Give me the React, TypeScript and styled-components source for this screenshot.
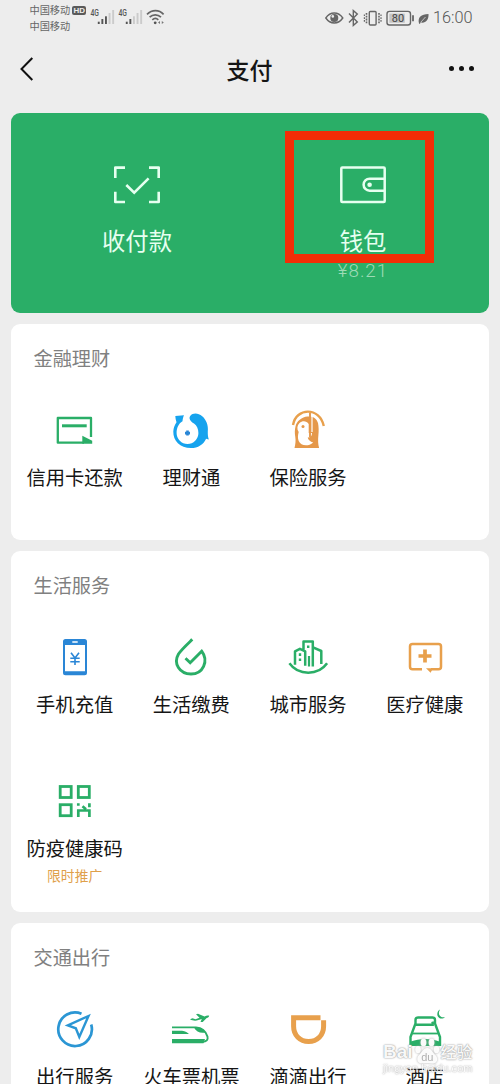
import React from "react";
import styled, { createGlobalStyle } from "styled-components";

const GREEN = "#2aae67";
const ORANGE = "#e8a04c";
const BLUE = "#2a86d6";

const GlobalStyle = createGlobalStyle`
  *, *::before, *::after { box-sizing: border-box; }
  body {
    margin: 0;
    background: #ededed;
    font-family: "Noto Sans CJK SC", sans-serif;
    color: #151515;
  }
`;

const Screen = styled.div`
  position: relative;
  width: 500px;
  height: 1084px;
  overflow: hidden;
  background: #ededed;
`;

const StatusBar = styled.header`
  display: flex;
  justify-content: space-between;
  height: 36px;
  padding: 0 28px 0 29.5px;
  color: #666;
`;

const Carriers = styled.div`
  display: flex;
  align-items: flex-start;
`;

const CarrierNames = styled.div`
  display: flex;
  flex-direction: column;
  padding-top: 2px;
  font-size: 10.2px;
  line-height: 15.5px;
`;

const HdBadge = styled.span`
  margin: 5.5px 3.5px 0 2px;
  width: 14px;
  height: 9px;
  border-radius: 2px;
  background: #5a5a5a;
  color: #ededed;
  font: bold 8px/9px "Liberation Sans", sans-serif;
  text-align: center;
`;

const Indicators = styled.div`
  display: flex;
  align-items: center;
  height: 35px;
`;

const Clock = styled.span`
  margin-left: 3px;
  width: 39px;
  font: 300 16.3px/20px Roboto, sans-serif;
  color: #555;
  white-space: nowrap;
`;

const NavBar = styled.nav`
  display: grid;
  grid-template-columns: 60px 1fr 60px;
  align-items: center;
  height: 65px;
  margin-bottom: 11.5px;
  padding: 0 26px 0 19px;
`;

const Title = styled.h1`
  margin: 0;
  padding-left: 6px;
  font-size: 23px;
  line-height: 32px;
  font-weight: 500;
  text-align: center;
`;

const MoreButton = styled.div`
  display: flex;
  justify-content: flex-end;
  gap: 4.6px;
`;

const Dot = styled.i`
  width: 5.2px;
  height: 5.2px;
  border-radius: 50%;
  background: #111;
`;

const PayCard = styled.section`
  display: grid;
  grid-template-columns: 226px 226px;
  justify-content: center;
  width: 478px;
  height: 200px;
  margin: 0 auto 11px 11px;
  border-radius: 9px;
  background: ${GREEN};
  color: #e6fff0;
`;

const PayItem = styled.div`
  position: relative;
  display: flex;
  flex-direction: column;
  align-items: center;
  padding-top: 48.5px;
`;

const PayLabel = styled.span`
  margin-top: 13.5px;
  font-size: 23.3px;
  line-height: 34px;
`;

const Balance = styled.span`
  margin-top: 2px;
  font: 300 18.8px/24px Roboto, sans-serif;
  letter-spacing: 1px;
  color: #9ddbb6;
`;

const Highlight = styled.div`
  position: absolute;
  left: 35px;
  top: 18.5px;
  width: 149px;
  height: 132px;
  border: 9px solid #f32d06;
`;

const Card = styled.section<{ $height: number }>`
  width: 478px;
  height: ${(p) => p.$height}px;
  margin: 0 0 11px 11px;
  border-radius: 9px;
  background: #fff;
`;

const CardTitle = styled.h2`
  margin: 0;
  padding: 20px 0 34px 22.5px;
  font-size: 19.2px;
  line-height: 28px;
  font-weight: 400;
  color: #808080;
`;

const Grid = styled.div`
  display: grid;
  grid-template-columns: repeat(4, 116.7px);
  grid-auto-rows: 143.5px;
  padding-left: 5.3px;
`;

const Cell = styled.div`
  display: flex;
  flex-direction: column;
  align-items: center;
  white-space: nowrap;
`;

const Label = styled.span`
  margin-top: 9px;
  font-size: 19.3px;
  line-height: 28px;
`;

const Promo = styled.span`
  margin-top: 3.5px;
  font-size: 13.8px;
  line-height: 20px;
  color: #dfa04a;
`;

const Watermark = styled.div`
  position: absolute;
  left: 383px;
  top: 1038px;
  width: 92px;
  color: rgba(255, 255, 255, 0.95);
  text-shadow: 0 0 2px #999, 0 0 1px #aaa;
`;

const WatermarkBrand = styled.div`
  display: flex;
  align-items: center;
  height: 27px;
  font: bold 19px/27px "Liberation Sans", "Noto Sans CJK SC", sans-serif;
`;

const WatermarkCn = styled.span`
  margin-left: 1px;
  font: 500 16px/27px "Noto Sans CJK SC", sans-serif;
`;

const WatermarkUrl = styled.div`
  font: 11px/11px "Liberation Sans", sans-serif;
  letter-spacing: 0.05px;
  margin-top: -2px;
  opacity: 0.75;
`;

const Icon = ({ children }: { children: React.ReactNode }) => (
  <svg width="48" height="48" viewBox="0 0 48 48" fill="none">
    {children}
  </svg>
);

const Signal = ({ strong }: { strong: number }) => (
  <svg width="28" height="30" viewBox="0 0 28 30">
    <text x="0.5" y="16.3" fontSize="8.500" fill="#555" fontFamily="Roboto, sans-serif" fontWeight="500" textLength="8.5" lengthAdjust="spacingAndGlyphs">
      4G
    </text>
    {[0, 1, 2, 3, 4].map((i) => (
      <rect key={i} x={7.8 + i * 3.6} y={[21.7, 19, 16.3, 13, 10][i]} width="1.9" height={24 - [21.7, 19, 16.3, 13, 10][i]} fill={i < strong ? "#555" : "#cbcbcb"} />
    ))}
  </svg>
);

const Wifi = () => (
  <svg width="20" height="30" viewBox="0 0 20 30" fill="none" stroke="#666" strokeWidth="1.7">
    <path d="M1 14.3C6 9.5 13 9.5 17.6 14.3M3.6 17.2c3.3-3.2 8-3.2 11.4 0M6.3 19.8c2-1.7 4.2-1.7 6 0" />
    <circle cx="9.2" cy="22.8" r="1.4" fill="#555" stroke="none" />
    <path d="M12 22.5l2-1.6v3.2zM17.8 22.5l-2-1.6v3.2z" fill="#777" stroke="none" />
  </svg>
);

const StatusIcons = () => (
  <svg width="105" height="24" viewBox="325 5 105 24" fill="none" stroke="#666" strokeWidth="1.4">
    <path d="M325.8 17c4.5-6.6 12.4-6.6 17 0-4.6 6.6-12.5 6.6-17 0Z" />
    <circle cx="334.3" cy="17" r="4" fill="#666" stroke="none" />
    <circle cx="332.8" cy="15.4" r="1.3" fill="#ededed" stroke="none" />
    <path d="M349 12.5l8.3 8.500-4 3.400V9.600l4 3.400-8.300 8.500" />
    <rect x="369.3" y="10.5" width="6.8" height="13.5" rx="1" />
    <path d="M366.5 12v10.500M379 12v10.500" strokeDasharray="1.8 1" strokeWidth="1.6" />
    <path d="M364.4 13.500v7.500M381 13.500v7.500" strokeDasharray="1.6 1.2" strokeWidth="1.2" />
    <rect x="387" y="10.4" width="23.5" height="13.6" rx="2.5" />
    <rect x="389.3" y="12.6" width="15.5" height="9.2" fill="#c5c5c5" stroke="none" />
    <path d="M413 14.3v6" strokeWidth="1.8" />
    <text x="398" y="21.2" fontSize="11" textAnchor="middle" fill="#444" stroke="none" fontFamily="Roboto, sans-serif">
      80
    </text>
    <path d="M419 22.5c-1.5-6 2-9.5 9.5-9.5.5 5.500-3 9.500-7.500 8.500l-1.500 1.500z" fill="#666" stroke="none" />
    <path d="M420.500 21.500l5-5.500" stroke="#ededed" strokeWidth="0.700" />
  </svg>
);

const ScanPay = () => (
  <svg width="50" height="48" viewBox="112 161 50 48" fill="none" stroke="#e6fff0" strokeWidth="2.600">
    <path d="M115.300 178v-10.400H125M149 167.600h9.700V178M158.700 191.700v10.300H149M125 202h-9.700v-10.300" strokeLinejoin="round" />
    <path d="M126.300 185l7.900 7.600 14.400-14.200" />
  </svg>
);

const Wallet = () => (
  <svg width="50" height="48" viewBox="338.200 161 50 48" fill="none" stroke="#e6fff0" strokeWidth="2.500">
    <rect x="341.500" y="167.600" width="43.400" height="34.400" rx="1" />
    <path d="M385 178.700h-15.200a6 6 0 0 0 0 12H385" />
    <circle cx="369.800" cy="184.700" r="2.300" fill="#e6fff0" stroke="none" />
  </svg>
);

const CreditCard = () => (
  <Icon>
    <path d="M40 31V12H6.800v24.700H33" stroke={GREEN} strokeWidth="2.300" strokeLinejoin="round" />
    <path d="M11 19.800h24.700" stroke={GREEN} strokeWidth="3" />
    <path d="M31.300 29.800l9.900 5v3H31.300z" fill={GREEN} />
  </Icon>
);

const Fund = () => (
  <Icon>
    <path
      d="M8.300 10l8.700-.8c-.8 1.800-1.300 3.600-1.500 6C11.500 17.500 9.500 22 9.600 27a10.900 10.900 0 0 0 21.800 0c0-4-1.500-7.300-4.400-9.500-3.800-2-5.500-5.200-3.800-7.500 2.800-3.400 8-3 12 .2 4 3.300 6.300 9 5.600 15.300-.1 3 .1 5 1 8l-2.700-.8C36.500 38.500 31 42 24 42 13 42 6 34.500 6.300 25.500c.2-3.500 1.200-6.500 3.200-9.300-.7-2-1.100-4-1.200-6.200Z"
      fill="#16a3ee"
    />
    <path d="M20.500 24.600v5M18 27.100h5" stroke={BLUE} strokeWidth="2.600" />
  </Icon>
);

const Insurance = () => (
  <Icon>
    <path d="M9 19C12 1.500 35.500.500 39.800 20" stroke={ORANGE} strokeWidth="2.400" />
    <path d="M11.500 20.500c1-5.500 6.500-9.500 12-10 5-.4 9 1.500 10.500 6.500.8 4 .8 8 .4 12-.5 5-.4 9 .7 13H10.500c.9-4 1.400-7 .8-11-.7-4-.6-7 .2-10.500Z" fill="#e5984a" />
    <path d="M15.500 17c2.700-2.500 7-2.500 9.200 1V27h3.300c0 3.200-1.500 4.500-4.300 4.600.5 2.400 2.500 4.200 5.500 4.900-5 4.500-12.500 3.500-14.500-1.500-1.200-3-.8-6 0-9-2-3-1.700-6.500.8-9Z" fill="#fff" />
    <path d="M26 7v24" stroke="#e5984a" strokeWidth="1.900" />
    <path d="M28 10.500V26" stroke="#fff" strokeWidth="1.200" />
    <circle cx="19" cy="20.500" r="1.500" fill="#e5984a" />
  </Icon>
);

const Phone = () => (
  <Icon>
    <path fillRule="evenodd" d="M14.500 6h19a2.500 2.500 0 0 1 2.500 2.500v31.200a2.500 2.500 0 0 1-2.500 2.500h-19a2.500 2.500 0 0 1-2.500-2.500V8.500A2.500 2.500 0 0 1 14.500 6ZM14 12v26.200h20V12Z" fill={BLUE} />
    <path d="M21.300 9h5.400" stroke="#fff" strokeWidth="1.500" />
    <path d="M20 19.700l4 5.300 4-5.300M24 25v7M19.300 25.300h9.400M19.300 28.700h9.400" stroke={BLUE} strokeWidth="1.600" />
  </Icon>
);

const Utilities = () => (
  <Icon>
    <path d="M25.300 6.400C20 11.500 14.500 16.500 11.500 21 6 30.500 12.500 41 24 41c12 0 18-13 10.700-22.800L23.200 29.800l-4.700-4.500" stroke={GREEN} strokeWidth="2.900" />
  </Icon>
);

const City = () => (
  <Icon>
    <path d="M5.400 30.300c9 12.600 28.700 12.600 37.700 0" stroke={GREEN} strokeWidth="2.500" />
    <path d="M11 31.800V18.300l4.900-2.500 5.300 2.500v14.500M19.500 16.500V8.500h9.300v25M29 14.300l8.300 3.700v13" stroke={GREEN} strokeWidth="2.500" strokeLinejoin="round" />
    <path d="M25 23v10.500" stroke={GREEN} strokeWidth="2.200" />
    <path d="M16 20.300v2.600M16 25.500v2.600M24.200 12.500v2.600" stroke={GREEN} strokeWidth="2.400" />
  </Icon>
);

const Medical = () => (
  <Icon>
    <path d="M21 36.300h-9.500a2.500 2.500 0 0 1-2.500-2.500V13.500a2.500 2.500 0 0 1 2.500-2.500h26a2.500 2.500 0 0 1 2.500 2.500v20.300a2.500 2.500 0 0 1-2.500 2.500H30" stroke={ORANGE} strokeWidth="2.500" />
    <path d="M25 35.200h7l-2.400 4.500z" fill={ORANGE} />
    <path d="M17.500 23h13M24 16.500v13" stroke={ORANGE} strokeWidth="3.700" />
  </Icon>
);

const HealthCode = () => (
  <Icon>
    <g stroke={GREEN} strokeWidth="2.800">
      <rect x="9.200" y="9.500" width="11" height="11" />
      <rect x="27.300" y="9.500" width="11" height="11" />
      <rect x="9.200" y="27.700" width="11" height="11" />
      <path d="M27.300 26.300v2.500M38.400 26.300v4M27.300 40v-6.500h11.100V40M31.500 29.200l3.500 3" strokeWidth="2.700" />
    </g>
  </Icon>
);

const Travel = () => (
  <Icon>
    <path d="M30.500 8.700A16.800 16.800 0 1 0 40.200 19.500" stroke="#2b96d4" strokeWidth="2.700" />
    <path d="M37.500 11L16.800 20.300l8 3 3.500 8.700z" stroke="#2b96d4" strokeWidth="2.400" />
  </Icon>
);

const TrainPlane = () => (
  <Icon>
    <path d="M5 22.400h24c6 .3 10 4.500 11.500 9.200.8 3.200-1 5.300-5 5.300" stroke={GREEN} strokeWidth="1.900" />
    <path d="M5 34h33l-1.500 4.300H5zM5 25.800h10c3.500.6 5.500 1.700 7 3.200H5zM27 22.500c7-.5 10 2 11.500 5-4.500 1.200-9.500-.5-11.500-5Z" fill={GREEN} />
    <path d="M23 14.200l2.500-1 3 1 4-1.500-3.500-3.500 2-.5 6.500 2.700c2-.9 3.500-1 4.700-.6-.2 1-1 1.700-2.500 2.300l-4 3.800-2.200.2 1.300-3c-4 1.500-8 2.500-11.800.1Z" fill={GREEN} />
  </Icon>
);

const Didi = () => (
  <Icon>
    <path d="M36.500 12.700H9.600v8.500c0 9 6.300 15.300 15 15.300s15-6.300 15-15.300v-6" stroke={ORANGE} strokeWidth="5" />
  </Icon>
);

const Hotel = () => (
  <Icon>
    <path d="M14.200 19.700h17.500c0-1.200 0-2-.3-3M9.500 41V32l5-13.500v-3.500a2.500 2.500 0 0 1 2.500-2.500h14.500a2.500 2.500 0 0 1 2.500 2.500v3.500l5 13.500v9" stroke={GREEN} strokeWidth="2.400" />
    <path d="M11 28.500h27" stroke={GREEN} strokeWidth="1.800" />
    <path d="M10 36.500c8-3.500 20-3.500 28.500 0V41H10z" fill={GREEN} />
    <path d="M39 4.500c-3 5 .5 9 5 7.500-2.500 3-7.500 1.500-7.700-2.500-.1-2.200 1-4.200 2.700-5Z" fill={GREEN} />
  </Icon>
);

const PawMark = styled.svg`
  margin-left: 1px;
  filter: drop-shadow(0 0 0.8px #aaa);
`;

const Paw = () => (
  <PawMark width="26" height="32" viewBox="0 0 26 32">
    <g fill="#fff" fillOpacity="0.95">
      <ellipse cx="4" cy="13.500" rx="2.800" ry="3.600" />
      <ellipse cx="9.500" cy="6.500" rx="2.900" ry="3.900" />
      <ellipse cx="17.500" cy="6.500" rx="2.900" ry="3.900" />
      <ellipse cx="22.500" cy="13.500" rx="2.800" ry="3.600" />
      <path d="M13.300 12c4 0 5 4.500 8 7 3.500 3.500 2 8.500-2.500 8.500-2.500 0-3.500-.5-5.500-.5s-3 .5-5.500.5C3 27.500 2 22 5 19c3-2.500 4.300-7 8.300-7Z" />
    </g>
    <text x="13.300" y="24.500" fontSize="11" fontWeight="400" textAnchor="middle" fill="#b0b0b0" fontFamily="Liberation Sans, sans-serif" style={{ textShadow: "none" }}>
      du
    </text>
  </PawMark>
);

type Service = { name: string; icon: React.ReactNode; promo?: string };

const groups: { title: string; height: number; services: Service[] }[] = [
  {
    title: "金融理财",
    height: 216.5,
    services: [
      { name: "信用卡还款", icon: <CreditCard /> },
      { name: "理财通", icon: <Fund /> },
      { name: "保险服务", icon: <Insurance /> },
    ],
  },
  {
    title: "生活服务",
    height: 360.5,
    services: [
      { name: "手机充值", icon: <Phone /> },
      { name: "生活缴费", icon: <Utilities /> },
      { name: "城市服务", icon: <City /> },
      { name: "医疗健康", icon: <Medical /> },
      { name: "防疫健康码", icon: <HealthCode />, promo: "限时推广" },
    ],
  },
  {
    title: "交通出行",
    height: 216,
    services: [
      { name: "出行服务", icon: <Travel /> },
      { name: "火车票机票", icon: <TrainPlane /> },
      { name: "滴滴出行", icon: <Didi /> },
      { name: "酒店", icon: <Hotel /> },
    ],
  },
];

export default function App() {
  return (
    <Screen>
      <GlobalStyle />
      <StatusBar>
        <Carriers>
          <CarrierNames>
            <span>中国移动</span>
            <span>中国移动</span>
          </CarrierNames>
          <HdBadge>HD</HdBadge>
          <Signal strong={3} />
          <Signal strong={2} />
          <Wifi />
        </Carriers>
        <Indicators>
          <StatusIcons />
          <Clock>16:00</Clock>
        </Indicators>
      </StatusBar>
      <NavBar>
        <svg width="16" height="26" viewBox="0 0 16 26" fill="none" stroke="#111" strokeWidth="2">
          <path d="M13.300 2L2.500 13l10.800 11" />
        </svg>
        <Title>支付</Title>
        <MoreButton>
          <Dot />
          <Dot />
          <Dot />
        </MoreButton>
      </NavBar>
      <PayCard>
        <PayItem>
          <ScanPay />
          <PayLabel>收付款</PayLabel>
        </PayItem>
        <PayItem>
          <Wallet />
          <PayLabel>钱包</PayLabel>
          <Balance>¥8.21</Balance>
          <Highlight />
        </PayItem>
      </PayCard>
      {groups.map((group) => (
        <Card key={group.title} $height={group.height}>
          <CardTitle>{group.title}</CardTitle>
          <Grid>
            {group.services.map((service) => (
              <Cell key={service.name}>
                {service.icon}
                <Label>{service.name}</Label>
                {service.promo && <Promo>{service.promo}</Promo>}
              </Cell>
            ))}
          </Grid>
        </Card>
      ))}
      <Watermark>
        <WatermarkBrand>
          Bai
          <Paw />
          <WatermarkCn>经验</WatermarkCn>
        </WatermarkBrand>
        <WatermarkUrl>jingyan.baidu.com</WatermarkUrl>
      </Watermark>
    </Screen>
  );
}
